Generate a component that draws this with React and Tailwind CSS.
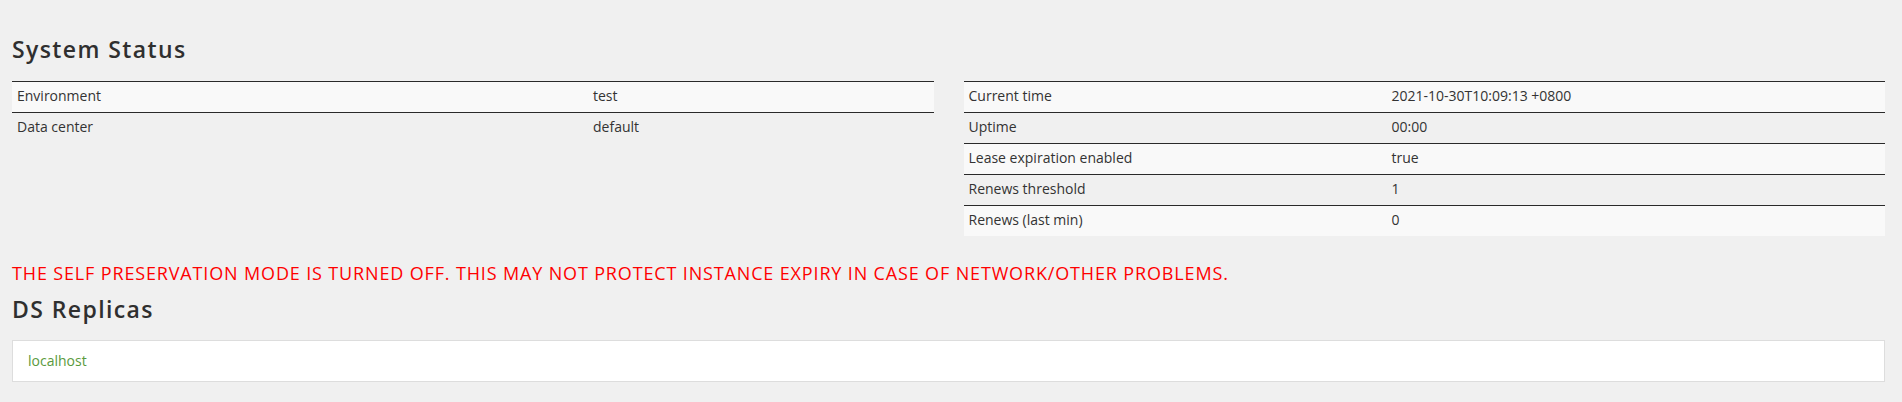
export default function App() {
  const left = [
    ["Environment", "test"],
    ["Data center", "default"],
  ];
  const right = [
    ["Current time", "2021-10-30T10:09:13 +0800"],
    ["Uptime", "00:00"],
    ["Lease expiration enabled", "true"],
    ["Renews threshold", "1"],
    ["Renews (last min)", "0"],
  ];
  const Table = ({ rows, labelW }) => (
    <div className="flex flex-col">
      {rows.map(([k, v], i) => (
        <div
          key={k}
          className={
            "flex border-t border-[#2a2a2a] " +
            (i % 2 === 0 ? "bg-[#f9f9f9]" : "bg-transparent")
          }
        >
          <div
            className="shrink-0 px-[5px] pt-[4px] pb-[6px] leading-[20px]"
            style={{ width: labelW }}
          >
            {k}
          </div>
          <div className="px-[5px] pt-[4px] pb-[6px] leading-[20px]">{v}</div>
        </div>
      ))}
    </div>
  );
  return (
    <div className="min-h-[402px] bg-[#f0f0f0] pl-[12px] pr-[17px] text-[14px] text-[#333] font-['Open_Sans',sans-serif]">
      <h2 className="pt-[36px] text-[23px] leading-[26px] font-semibold tracking-[1.4px] text-[#2f2f2f]">
        System Status
      </h2>
      <div className="mt-[19px] grid grid-cols-2 gap-[30px] items-start">
        <Table rows={left} labelW={576} />
        <Table rows={right} labelW={423} />
      </div>
      <p className="mt-[24px] text-[18px] leading-[26px] tracking-[0.85px] text-[#ff0000]">
        THE SELF PRESERVATION MODE IS TURNED OFF. THIS MAY NOT PROTECT INSTANCE EXPIRY IN CASE OF NETWORK/OTHER PROBLEMS.
      </p>
      <h2 className="mt-[10px] text-[23px] leading-[26px] font-semibold tracking-[1.4px] text-[#2f2f2f]">
        DS Replicas
      </h2>
      <div className="mt-[18px] border border-[#dddddd] bg-white px-[15px] py-[10px] leading-[20px]">
        <span className="text-[#5a9a3d]">localhost</span>
      </div>
    </div>
  );
}
